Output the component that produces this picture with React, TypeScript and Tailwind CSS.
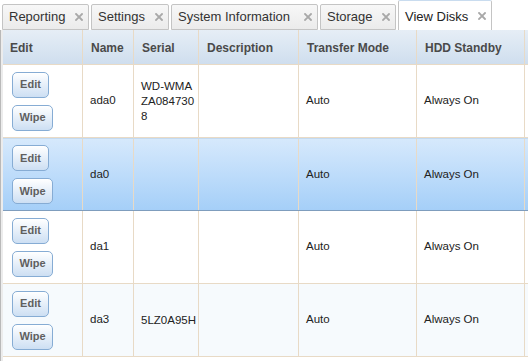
import React from "react";

const font = { fontFamily: '"Liberation Sans", Arial, sans-serif' };

function CloseX() {
  return (
    <svg width="8" height="8" viewBox="0 0 8 8" className="shrink-0">
      <path d="M1 1 L7 7 M7 1 L1 7" stroke="#a8a8a8" strokeWidth="1.8" strokeLinecap="square" />
    </svg>
  );
}

function Tab({ label, w, active }: { label: string; w: string; active?: boolean }) {
  if (active) {
    return (
      <div
        className={`${w} h-[30px] flex items-center justify-between pl-[6px] pr-[5px] bg-white border border-b-0 border-[#c4c4c4] border-t-[#c9dcef] rounded-t-[2px] text-[13px] text-[#222]`}
      >
        <span className="pt-[2px]">{label}</span>
        <CloseX />
      </div>
    );
  }
  return (
    <div
      className={`${w} h-[26px] flex items-center justify-between pl-[6px] pr-[5px] bg-gradient-to-b from-[#f7f7f7] to-[#ebebeb] border border-[#c4c4c4] rounded-t-[2px] text-[13px] text-[#333]`}
    >
      <span>{label}</span>
      <CloseX />
    </div>
  );
}

function Btn({ label, w }: { label: string; w: string }) {
  return (
    <div
      className={`${w} h-[26px] flex items-center justify-center rounded-[5px] border border-[#86acd4] bg-gradient-to-b from-[#ffffff] to-[#cddff3] text-[11px] font-bold text-[#5f5f5f] shadow-[inset_0_1px_0_#fff]`}
    >
      {label}
    </div>
  );
}

type Row = { name: string; serial: string; selected?: boolean; bg: string };

const rows: Row[] = [
  { name: "ada0", serial: "WD-WMAZA0847308", bg: "bg-white" },
  { name: "da0", serial: "", selected: true, bg: "" },
  { name: "da1", serial: "", bg: "bg-white" },
  { name: "da3", serial: "5LZ0A95H", bg: "bg-[#f6fafd]" },
];

const grid = "grid grid-cols-[80px_51px_65px_100px_118px_108px_1fr]";
const cell = "border-r border-[#e8dac6] pl-[7px] flex items-center";

export default function App() {
  return (
    <div className="w-[528px] h-[361px] bg-white overflow-hidden" style={font}>
      <div className="h-[30px] flex items-end gap-[2px] pl-[2px]">
        <Tab label="Reporting" w="w-[87px]" />
        <Tab label="Settings" w="w-[78px]" />
        <Tab label="System Information" w="w-[147px]" />
        <Tab label="Storage" w="w-[76px]" />
        <Tab label="View Disks" w="w-[94px]" active />
      </div>
      <div className="border-l border-[#b9b9b9] pl-[2px] bg-[#ececec] h-[331px]">
        <div className="bg-white h-full">
          <div
            className={`${grid} h-[35px] bg-gradient-to-b from-[#e6eef6] to-[#cfdeee] border-b border-[#e8dac6] text-[12px] font-bold text-[#4a4a4a]`}
          >
            <div className={`${cell} pt-[2px]`}>Edit</div>
            <div className={`${cell} pl-[8px] pt-[2px]`}>Name</div>
            <div className={`${cell} pl-[8px] pt-[2px]`}>Serial</div>
            <div className={`${cell} pl-[8px] pt-[2px]`}>Description</div>
            <div className={`${cell} pl-[8px] pt-[2px]`}>Transfer Mode</div>
            <div className={`${cell} pl-[8px] pt-[2px]`}>HDD Standby</div>
            <div />
          </div>
          {rows.map((r) => (
            <div
              key={r.name}
              className={`${grid} h-[73px] text-[11.5px] text-[#222] ${
                r.selected
                  ? "bg-gradient-to-b from-[#d6e9fc] to-[#a5cff8] border-t border-t-[#c4daf0] border-b border-b-[#7f9dbd]"
                  : `${r.bg} border-b border-[#e8dac6]`
              }`}
            >
              <div className={`${cell} flex-col items-start justify-center gap-[7px] pl-[9px]`}>
                <Btn label="Edit" w="w-[37px]" />
                <Btn label="Wipe" w="w-[41px]" />
              </div>
              <div className={`${cell} pl-[6px]`}>{r.name}</div>
              <div className={`${cell} pr-0 break-all leading-[15px]`}>{r.serial}</div>
              <div className={cell}></div>
              <div className={cell}>Auto</div>
              <div className={cell}>Always On</div>
              <div />
            </div>
          ))}
        </div>
      </div>
    </div>
  );
}
